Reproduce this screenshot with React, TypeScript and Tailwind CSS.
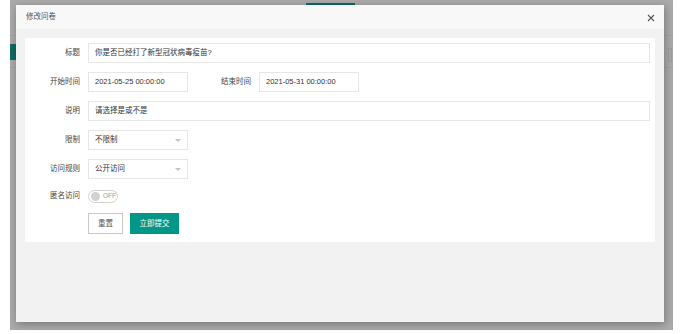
import React from 'react';

const font = { fontFamily: '"Liberation Sans", "Noto Sans CJK SC", sans-serif' };

function Label({ text, width = 'w-[63px]' }: { text: string; width?: string }) {
  return (
    <div className={`${width} shrink-0 pr-[8px] text-right text-[7.5px] leading-[20px] text-[#444]`}>
      {text}
    </div>
  );
}

function TextBox({ value, width = 'flex-1' }: { value: string; width?: string }) {
  return (
    <div className={`${width} h-[20px] border border-[#e6e6e6] bg-white pl-[6px] text-[7.5px] leading-[18px] text-[#333]`}>
      {value}
    </div>
  );
}

function SelectBox({ value }: { value: string }) {
  return (
    <div className="relative flex h-[20px] w-[100px] items-center border border-[#e6e6e6] bg-white pl-[6px] text-[7.5px] text-[#333]">
      {value}
      <span className="absolute right-[6px] top-[8px] h-0 w-0 border-x-[3px] border-t-[3px] border-x-transparent border-t-[#c2c2c2]" />
    </div>
  );
}

export default function App() {
  return (
    <div className="relative h-[334px] w-[697px] overflow-hidden bg-white" style={font}>
      {/* dimmed page behind the dialog */}
      <div className="relative ml-[10px] h-[330px] w-[663px] bg-[#aaaaaa]">
        <div className="absolute left-[296px] top-[3px] h-[2px] w-[49px] bg-[#0b6b62]" />
        <div className="absolute left-0 top-[44px] h-[16px] w-[8px] bg-[#106a60]" />
        <div className="absolute left-0 top-[35px] h-px w-full bg-[#a3a3a3]" />
        <div className="absolute left-0 top-[67px] h-px w-full bg-[#a3a3a3]" />
        <div className="absolute right-[1px] top-[48px] h-[14px] w-[4px] border border-[#9c9c9c]" />

        {/* dialog */}
        <div className="absolute left-[6px] top-[5px] flex h-[317px] w-[648px] flex-col bg-[#f2f2f2] shadow-[1px_2px_8px_rgba(0,0,0,0.3)]">
          <div className="flex h-[25px] shrink-0 items-center justify-between border-b border-[#eee] bg-[#f8f8f8] pl-[10px] pr-[9px]">
            <span className="text-[7.5px] text-[#555]">修改问卷</span>
            <svg width="8" height="8" viewBox="0 0 8 8" className="mt-[1px]">
              <path d="M1 1 L7 7 M7 1 L1 7" stroke="#555" strokeWidth="1.1" />
            </svg>
          </div>

          <div className="px-[9px] pt-[8px]">
            <div className="flex flex-col gap-[9px] rounded-[2px] bg-white pb-[8px] pr-[5px] pt-[5px]">
              <div className="flex">
                <Label text="标题" />
                <TextBox value="你是否已经打了新型冠状病毒疫苗?" />
              </div>

              <div className="flex">
                <Label text="开始时间" />
                <TextBox value="2021-05-25 00:00:00" width="w-[100px]" />
                <Label text="结束时间" width="w-[71px]" />
                <TextBox value="2021-05-31 00:00:00" width="w-[100px]" />
              </div>

              <div className="flex">
                <Label text="说明" />
                <TextBox value="请选择是或不是" />
              </div>

              <div className="flex">
                <Label text="限制" />
                <SelectBox value="不限制" />
              </div>

              <div className="flex">
                <Label text="访问规则" />
                <SelectBox value="公开访问" />
              </div>

              <div className="flex h-[16px] items-center">
                <div className="w-[63px] shrink-0 pr-[8px] text-right text-[7.5px] text-[#444]">匿名访问</div>
                <div className="flex h-[13px] w-[30px] items-center gap-[3px] rounded-full border border-[#d2d2d2] pl-[2px]">
                  <span className="h-[9px] w-[9px] rounded-full bg-[#d2d2d2]" />
                  <span className="text-[6.5px] leading-none text-[#999]">OFF</span>
                </div>
              </div>

              <div className="flex pl-[63px]">
                <div className="flex h-[21px] w-[35px] items-center justify-center border border-[#c9c9c9] bg-white text-[7.5px] text-[#555]">
                  重置
                </div>
                <div className="ml-[7px] flex h-[21px] w-[49px] items-center justify-center bg-[#009688] text-[7.5px] text-white">
                  立即提交
                </div>
              </div>
            </div>
          </div>
        </div>
      </div>
    </div>
  );
}
